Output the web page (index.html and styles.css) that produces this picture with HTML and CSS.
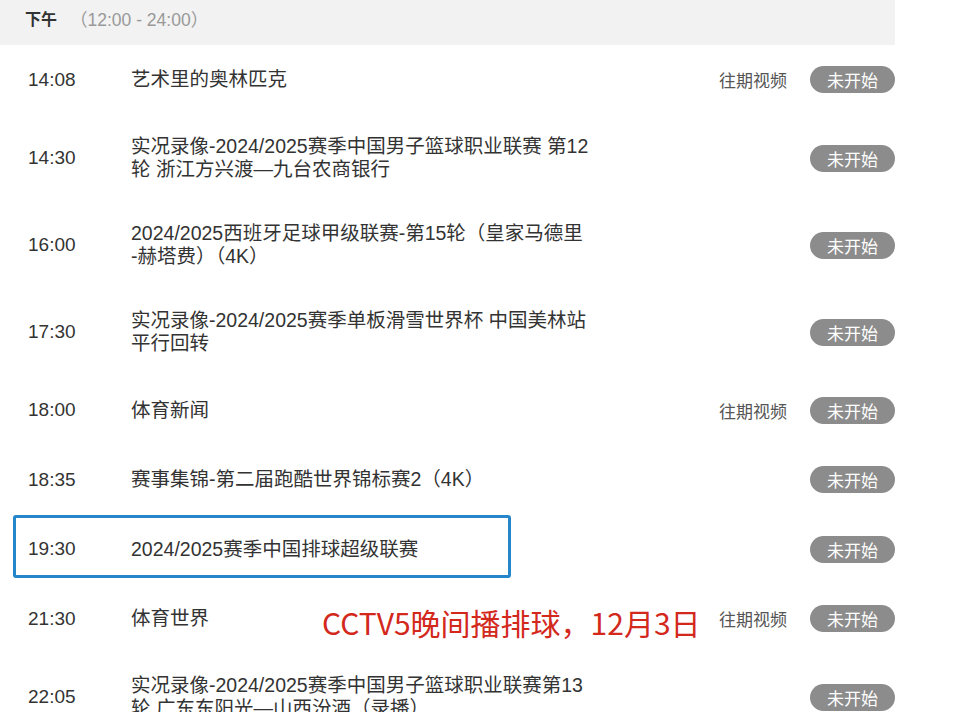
FILE: index.html
```html
<!DOCTYPE html>
<html lang="zh-CN">
<head>
<meta charset="utf-8">
<title>节目单</title>
<link rel="stylesheet" href="styles.css">
</head>
<body>
<div class="schedule">
  <div class="period">
    <span class="period-name">下午</span>
    <span class="period-range">（12:00 - 24:00）</span>
  </div>
  <ul class="list">
    <li class="row">
      <span class="time">14:08</span>
      <span class="title">艺术里的奥林匹克</span>
      <span class="replay">往期视频</span>
      <span class="status">未开始</span>
    </li>
    <li class="row two">
      <span class="time">14:30</span>
      <span class="title">实况录像-2024/2025赛季中国男子篮球职业联赛 第12<br>轮 浙江方兴渡—九台农商银行</span>
      <span class="status">未开始</span>
    </li>
    <li class="row two">
      <span class="time">16:00</span>
      <span class="title">2024/2025西班牙足球甲级联赛-第15轮（皇家马德里<br>-赫塔费）（4K）</span>
      <span class="status">未开始</span>
    </li>
    <li class="row two">
      <span class="time">17:30</span>
      <span class="title">实况录像-2024/2025赛季单板滑雪世界杯 中国美林站<br>平行回转</span>
      <span class="status">未开始</span>
    </li>
    <li class="row">
      <span class="time">18:00</span>
      <span class="title">体育新闻</span>
      <span class="replay">往期视频</span>
      <span class="status">未开始</span>
    </li>
    <li class="row">
      <span class="time">18:35</span>
      <span class="title">赛事集锦-第二届跑酷世界锦标赛2（4K）</span>
      <span class="status">未开始</span>
    </li>
    <li class="row">
      <span class="time">19:30</span>
      <span class="title">2024/2025赛季中国排球超级联赛</span>
      <span class="status">未开始</span>
    </li>
    <li class="row">
      <span class="time">21:30</span>
      <span class="title">体育世界</span>
      <span class="replay">往期视频</span>
      <span class="status">未开始</span>
    </li>
    <li class="row two">
      <span class="time">22:05</span>
      <span class="title">实况录像-2024/2025赛季中国男子篮球职业联赛第13<br>轮 广东东阳光—山西汾酒（录播）</span>
      <span class="status">未开始</span>
    </li>
  </ul>
  <div class="highlight-box"></div>
  <div class="note">CCTV5晚间播排球，12月3日</div>
</div>
</body>
</html>
```

FILE: styles.css
```css
html, body {
  margin: 0;
  padding: 0;
  background: #ffffff;
  overflow: hidden;
}

body {
  font-family: "Liberation Sans", "Noto Sans CJK SC", sans-serif;
  color: #333333;
}

.schedule {
  position: relative;
  width: 895px;
}

.period {
  height: 45px;
  background: #f2f2f2;
  display: flex;
  align-items: center;
  padding: 0 0 9px 25px;
  box-sizing: border-box;
  font-size: 16px;
}

.period-name {
  font-weight: bold;
  color: #333333;
  font-family: "Noto Sans CJK SC", sans-serif;
}

.period-range {
  margin-left: 13px;
  color: #999999;
  font-size: 17.5px;
}

.list {
  list-style: none;
  margin: 0;
  padding: 0;
}

.row {
  display: flex;
  align-items: center;
  min-height: 69.5px;
  box-sizing: border-box;
  padding: 0 0 0 28px;
}

.row.two {
  padding-top: 20.5px;
  padding-bottom: 20.5px;
}

.time {
  width: 103px;
  flex: none;
  font-size: 19px;
  color: #333333;
}

.title {
  flex: 1;
  font-size: 19.5px;
  line-height: 23px;
  white-space: nowrap;
  color: #333333;
}

.replay {
  flex: none;
  margin-right: 23px;
  font-size: 17px;
  color: #555555;
  font-family: "Noto Sans CJK SC", sans-serif;
}

.status {
  flex: none;
  width: 85px;
  height: 27px;
  border-radius: 14px;
  background: #8c8c8c;
  color: #ffffff;
  font-size: 17px;
  line-height: 27px;
  text-align: center;
  font-family: "Noto Sans CJK SC", sans-serif;
}

.highlight-box {
  position: absolute;
  left: 13px;
  top: 515px;
  width: 498px;
  height: 63px;
  box-sizing: border-box;
  border: 3px solid #2586c9;
  border-radius: 3px;
}

.note {
  position: absolute;
  left: 322px;
  top: 603px;
  font-size: 30px;
  line-height: 38px;
  color: #d3281c;
  font-family: "Noto Sans CJK SC", sans-serif;
  white-space: nowrap;
}
```
